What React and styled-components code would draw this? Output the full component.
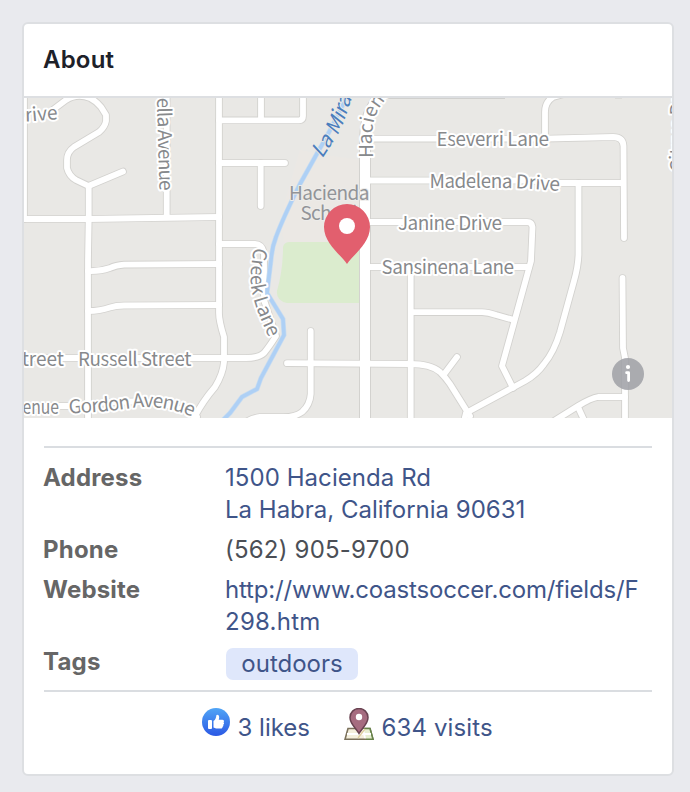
import React from "react";
import styled, { createGlobalStyle } from "styled-components";

const GlobalStyle = createGlobalStyle`
  *, *::before, *::after { box-sizing: border-box; }
  body {
    margin: 0;
    background: #e9eaee;
    font-family: Inter, "Liberation Sans", sans-serif;
    color: #4b4f56;
  }
`;

const Page = styled.main`
  height: 792px;
  padding: 22px 16px 16px 22px;
`;

const Card = styled.section`
  width: 652px;
  height: 754px;
  background: #fff;
  border: 2px solid #dddfe2;
  border-radius: 6px;
  overflow: hidden;
`;

const CardHeader = styled.header`
  height: 74px;
  padding: 0 19px;
  border-bottom: 2px solid #dddfe2;
`;

const Title = styled.h2`
  margin: 0;
  font-size: 24px;
  font-weight: 600;
  line-height: 71px;
  letter-spacing: 0.2px;
  color: #1d2129;
`;

const MapView = styled.svg`
  display: block;
  width: 648px;
  height: 320px;
  background: #e9e8e5;
`;

const Casing = styled.g`
  fill: none;
  stroke: #d3d2cf;
  stroke-width: ${(p) => (p.$main ? 12 : 7.6)}px;
  stroke-linecap: round;
  stroke-linejoin: round;
`;

const Surface = styled(Casing)`
  stroke: #fff;
  stroke-width: ${(p) => (p.$main ? 10 : 5.8)}px;
`;

const MapLabel = styled.text`
  font-family: "Noto Sans CJK SC", "Noto Sans", sans-serif;
  font-size: ${(p) => (p.$water ? 20.5 : 19)}px;
  font-style: ${(p) => (p.$water ? "italic" : "normal")};
  fill: ${(p) => (p.$water ? "#4a7dbd" : p.$place ? "#929498" : "#87898c")};
  stroke: ${(p) => (p.$water ? "#e9e8e5" : p.$place ? "#edecea" : "#fff")};
  stroke-width: ${(p) => (p.$water || p.$place ? 2 : 4)}px;
  stroke-linejoin: round;
  paint-order: stroke;
`;

const Details = styled.dl`
  margin: 28px 20px 0;
  padding: 14px 0 10px;
  border-top: 2px solid #dadde1;
  border-bottom: 2px solid #dadde1;
  display: grid;
  grid-template-columns: 181px 1fr;
  row-gap: 8px;
  font-size: 24px;
  line-height: 32px;
`;

const Term = styled.dt`
  margin-left: -1px;
  font-weight: 700;
  color: #666;
  letter-spacing: 0.2px;
`;

const Value = styled.dd`
  margin: 0;
  white-space: nowrap;
`;

const Line = styled.span`
  display: block;
  color: ${(p) => (p.$plain ? "#4b4f56" : "#3f5589")};
  letter-spacing: ${(p) => p.$tracking || 0}px;
`;

const TagRow = styled(Value)`
  height: 34px;
  padding: 2px 0 0 1px;
`;

const Tag = styled.span`
  display: block;
  width: 132px;
  height: 32px;
  border-radius: 7px;
  background: #dfe7fb;
  color: #3f5589;
  line-height: 31px;
  text-align: center;
`;

const Stats = styled.footer`
  display: flex;
  align-items: flex-start;
  padding: 16px 0 0 178px;
  gap: 34px;
`;

const Stat = styled.div`
  display: flex;
  align-items: flex-start;
  gap: 7.5px;
  color: #3f5589;
  font-size: 24px;
  line-height: 39px;
  letter-spacing: ${(p) => p.$tracking || 0}px;
  svg { display: block; flex: none; }
`;

const streets = [
  "M24 90V219",
  "M50 112L66 100Q77 93 90 98Q96 101 101 107L106 115V121Q105 127 99 132L74 147Q67 152 67 160V168Q69 176 76 180L88.5 186",
  "M88.5 186L123 171.500",
  "M88.7 186V219L88 260V425",
  "M166.700 90V217",
  "M18 219L88 219L219 217",
  "M219 90V313Q219 321 224 337V362Q223 374 215 387Q202 402 193 420",
  "M219 120.300H299Q303 120.300 303 116V90",
  "M261 90V120",
  "M219 163H285",
  "M260.700 163V206",
  "M219 244H255Q262 244 264 253V300L276 336Q269 347 264 353Q259 358 246 358H18",
  "M88 271Q100 271.500 110 268Q116 265 124 264.600L219 264",
  "M88 311Q100 311 110 307.500Q116 305.500 124 305.500L219 305",
  "M18 406H70Q120 400 150 402Q180 406 197 417",
  "M310.700 331V394Q310 405 302 412Q295 417 284 417L260 417Q252 418 246 422",
  "M287 363.200L410 364Q431 364 440 372Q446 378 450 384L470 416",
  "M457 357L445 373",
  "M410.700 267V425",
  "M365 138.700H545L613 137Q623 137 623.500 146L624 238",
  "M545 138V112Q545 102 553 97L564 94",
  "M365 180.500H530L560 183H623",
  "M578.500 183V255Q578 267 574 281L560 332Q554 352 544 364Q537 374 525 381L466 413L463 425",
  "M365 222H527Q532 222 532.500 227L531 261L502 366L513 388",
  "M365 267H529",
  "M411 312.200H482Q488 312.200 496 315L514 320",
  "M622.500 278L623 348L625 358V425",
  "M625 397H598Q591 398 578 406L554 421",
  "M578 407L584 420",
];

const mainRoad = "M365 425V145Q365 119 372 108L382 90";

const creek =
  "M350 90Q331 130 319 150L300 184Q283 218 276 237Q272 247 271 260L267 293L283 319L284 335L261 378L257 389L242 397L230 413L220 423";

function AreaMap() {
  return (
    <MapView viewBox="24 98 648 320" role="img" aria-label="Map">
      <defs>
        <path id="ella" d="M157 98Q158 140 159.500 191.500" />
        <path id="creek" d="M254.500 247Q249 270 251.500 289Q254 303 260 317L272 345" />
        <path id="hacienda" d="M372.500 158V134Q372 119 380 107L398 82" />
        <path id="river" d="M322 159L337 136Q345 121 349 106L360 76" />
        <path id="gordon" d="M69 413.500L98 412Q120 410 132 408Q160 404 190 416L202 421" />
        <path id="drive" d="M-14 122.500L30 121.500L58 119" />
        <path id="madelena" d="M429.500 188H500Q515 188 530 189L575 192" />
      </defs>
      <path d="M300 150L325 155L362 160V242H284L280 220Z" fill="#ebe8e4" />
      <path d="M290 242H360V303H287Q276 301 277 291Q283 270 283 247Q284 242 290 242Z" fill="#dbecce" />
      <path d="M384 98H505M615 97.500H622" stroke="#d0d0ce" strokeWidth="2" />
      <Casing>{streets.map((d) => <path key={d} d={d} />)}</Casing>
      <Casing $main><path d={mainRoad} /></Casing>
      <Surface>{streets.map((d) => <path key={d} d={d} />)}</Surface>
      <Surface $main><path d={mainRoad} /></Surface>
      <path d={creek} fill="none" stroke="#c9dcf0" strokeWidth="5" />
      <path d={creek} fill="none" stroke="#aed0f5" strokeWidth="3.600" />
      <MapLabel textAnchor="end"><textPath href="#drive" startOffset="100%">Drive</textPath></MapLabel>
      <MapLabel><textPath href="#ella" textLength="93">ella Avenue</textPath></MapLabel>
      <MapLabel><textPath href="#creek" textLength="94">Creek Lane</textPath></MapLabel>
      <MapLabel><textPath href="#hacienda">Hacienda</textPath></MapLabel>
      <MapLabel $water><textPath href="#river">La Mirada</textPath></MapLabel>
      <MapLabel x="64" y="365.500" textAnchor="end">Street</MapLabel>
      <MapLabel x="78" y="365.500" textLength="113.500">Russell Street</MapLabel>
      <MapLabel x="22.500" y="413.500" textLength="36.500" lengthAdjust="spacingAndGlyphs">enue</MapLabel>
      <MapLabel><textPath href="#gordon" textLength="125">Gordon Avenue</textPath></MapLabel>
      <MapLabel x="436.500" y="145.500" textLength="112.500">Eseverri Lane</MapLabel>
      <MapLabel><textPath href="#madelena" textLength="130">Madelena Drive</textPath></MapLabel>
      <MapLabel x="398" y="229.500" textLength="104">Janine Drive</MapLabel>
      <MapLabel x="381.500" y="273.500" textLength="132.500">Sansinena Lane</MapLabel>
      <MapLabel $place x="289" y="199.500" textLength="80.500">Hacienda</MapLabel>
      <MapLabel $place x="300.500" y="220" textLength="57">School</MapLabel>
      <MapLabel transform="translate(683.500 172) rotate(-90)">Citrus Dr</MapLabel>
      <path
        d="M347 264C340 254 324 243 324 227A23 23 0 1 1 370 227C370 243 354 254 347 264Z"
        fill="#e25f6e"
      />
      <circle cx="347" cy="226" r="8" fill="#fff" />
      <circle cx="628" cy="374" r="16" fill="#a0a2a7" fillOpacity="0.880" />
      <circle cx="628" cy="367" r="2.100" fill="#fff" />
      <path d="M626.600 372.700H628.600V380.600" fill="none" stroke="#fff" strokeWidth="2.800" strokeLinecap="round" strokeLinejoin="round" />
    </MapView>
  );
}

function LikeIcon() {
  return (
    <svg width="28" height="28" viewBox="0 0 28 28">
      <defs>
        <linearGradient id="like" x1="0" y1="0" x2="0" y2="1">
          <stop offset="0" stopColor="#50a5f6" />
          <stop offset="1" stopColor="#2b58e4" />
        </linearGradient>
      </defs>
      <circle cx="14" cy="14" r="14" fill="url(#like)" />
      <rect x="6" y="12" width="4" height="9" rx="1" fill="#fff" />
      <path d="M11.500 13C13.500 11.500 14.200 9.500 14.300 7.400C14.400 6.200 17.200 6.100 17.200 9.300C17.200 10.400 16.900 11.200 16.700 11.700H20.300C22 11.700 22.600 13.400 21.500 14.300C22.500 15.200 22 16.500 21.200 16.800C21.700 17.700 21.200 18.600 20.500 18.900C20.500 20 19.800 20.400 18.800 20.400H14.200C13 20.400 12.500 19.700 11.500 19.500Z" fill="#fff" />
    </svg>
  );
}

function VisitIcon() {
  return (
    <svg width="30" height="32" viewBox="0 0 30 32">
      <path d="M4 20.500H26L29 31.300H1Z" fill="#f4efdc" stroke="#7b715b" strokeWidth="1.600" />
      <path d="M18 20.500H26L29 31.300H22" fill="#e8efd2" stroke="#67844a" strokeWidth="1.600" />
      <path d="M3 26H27M19 21L21 30" stroke="#fff" strokeWidth="1.800" />
      <path d="M14 30L21 21" stroke="#dfcf9f" strokeWidth="1.300" />
      <path d="M15 25.500C12 20 6 16 6 9.500A9 9 0 0 1 24 9.500C24 16 18 20 15 25.500Z" fill="#a66c80" stroke="#694251" strokeWidth="1.500" />
      <circle cx="15" cy="9" r="3.200" fill="#fff" />
    </svg>
  );
}

export default function App() {
  return (
    <>
      <GlobalStyle />
      <Page>
        <Card>
          <CardHeader><Title>About</Title></CardHeader>
          <AreaMap />
          <Details>
            <Term>Address</Term>
            <Value>
              <Line $tracking={0.06}>1500 Hacienda Rd</Line>
              <Line>La Habra, California 90631</Line>
            </Value>
            <Term>Phone</Term>
            <Value><Line $plain $tracking={0.2}>(562) 905-9700</Line></Value>
            <Term>Website</Term>
            <Value>
              <Line $tracking={-0.18}>http://www.coastsoccer.com/fields/F</Line>
              <Line $tracking={0.25}>298.htm</Line>
            </Value>
            <Term>Tags</Term>
            <TagRow><Tag>outdoors</Tag></TagRow>
          </Details>
          <Stats>
            <Stat><LikeIcon /><span>3 likes</span></Stat>
            <Stat $tracking={0.12}><VisitIcon /><span>634 visits</span></Stat>
          </Stats>
        </Card>
      </Page>
    </>
  );
}
